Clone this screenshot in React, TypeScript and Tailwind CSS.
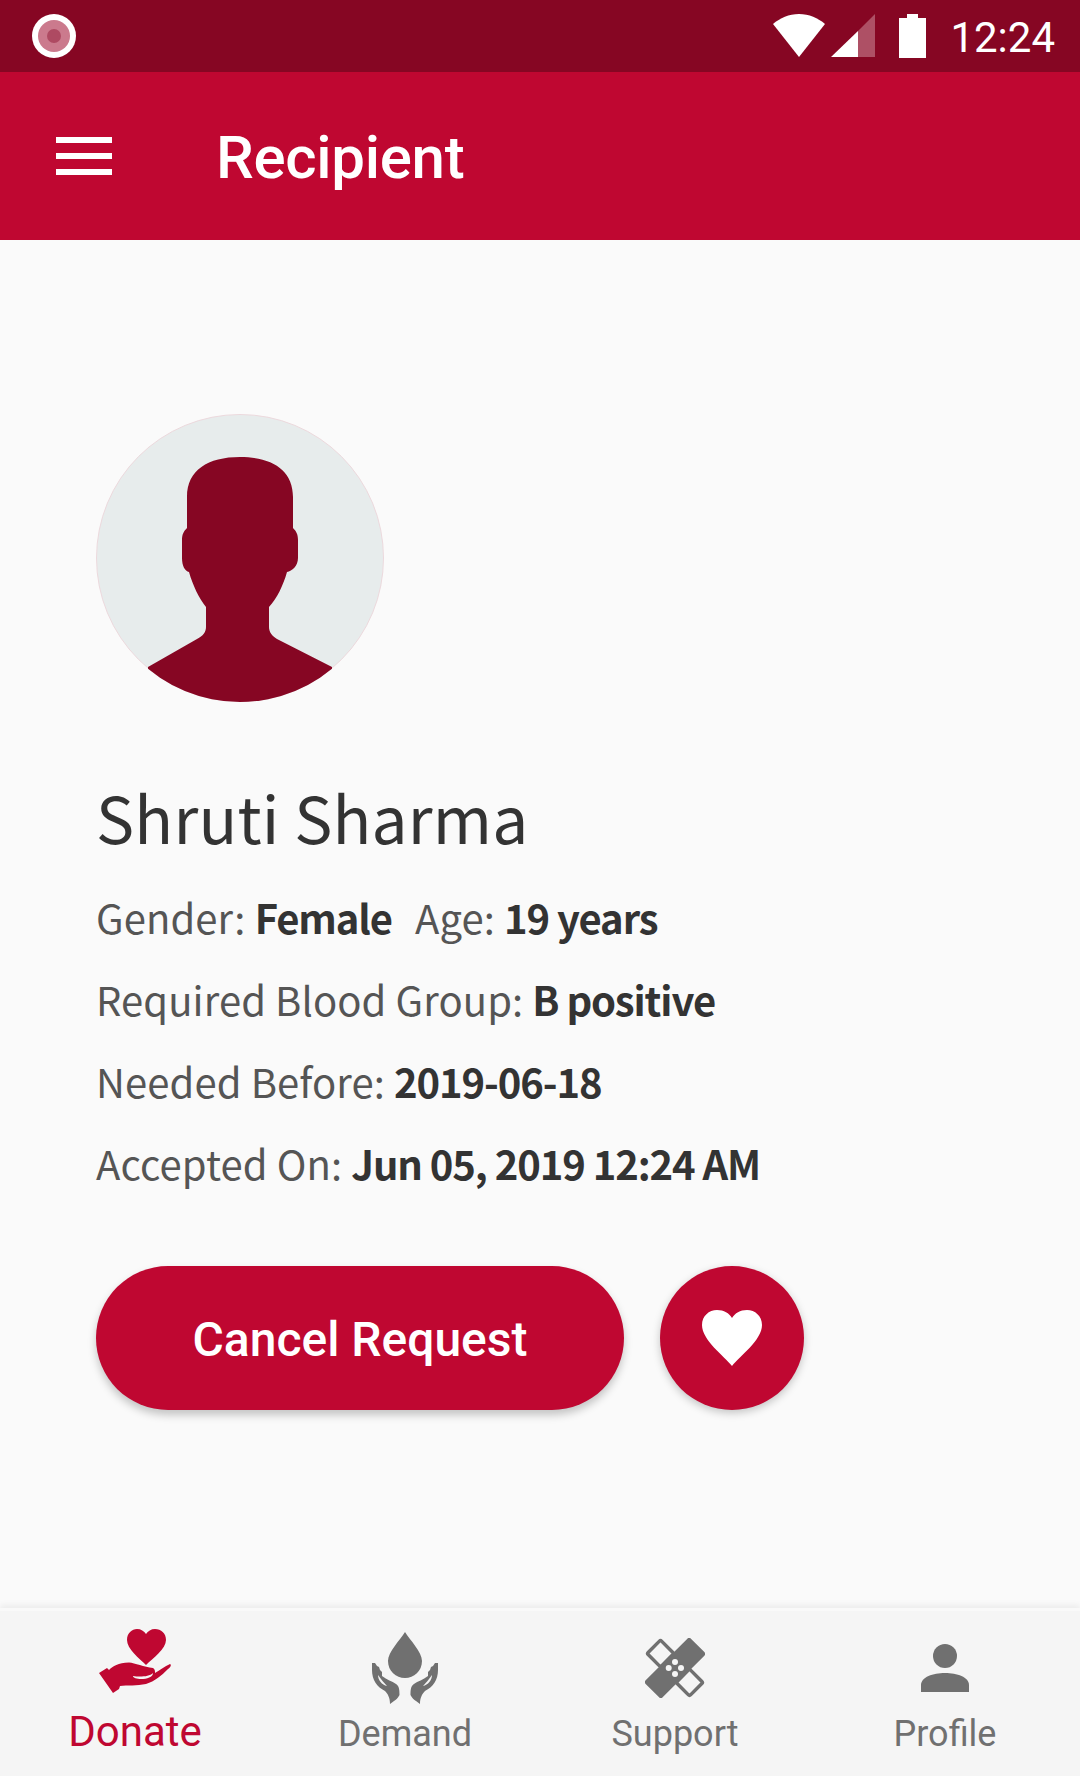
import React from 'react';

const ROBOTO = "font-['Roboto',sans-serif]";
const NOTO = "font-['Noto_Sans_CJK_SC','Noto_Sans',sans-serif]";

const StatusBar: React.FC = () => (
  <div className="h-[72px] bg-[#860623] flex items-center pl-[32px] pr-[25px]">
    <div className="w-[44px] h-[44px] rounded-full bg-white flex items-center justify-center">
      <div className="w-[32px] h-[32px] rounded-full bg-[#cb7a8d] flex items-center justify-center">
        <div className="w-[14px] h-[14px] rounded-full bg-[#ae4a62]"></div>
      </div>
    </div>
    <div className="ml-auto flex items-center">
      <svg width="52" height="44" viewBox="0 0 52 44" fill="#fff">
        <path d="M26 43 L0 10 C7 4 16 0 26 0 C36 0 45 4 52 10 Z" />
      </svg>
      <svg width="44" height="44" viewBox="0 0 44 44" className="ml-[6px]">
        <path d="M44 0 L44 43 L27 43 L27 17 Z" fill="#ae5065" />
        <path d="M27 17 L27 43 L0 43 Z" fill="#fff" />
      </svg>
      <svg width="27" height="44" viewBox="0 0 27 44" fill="#fff" className="ml-[24px]">
        <path d="M8 0 H19 V4 H27 V44 H0 V4 H8 Z" />
      </svg>
      <span className={`${ROBOTO} ml-[24px] pt-[4px] text-[42px] leading-none text-white`}>12:24</span>
    </div>
  </div>
);

const Header: React.FC = () => (
  <div className="h-[168px] bg-[#bf0731] flex items-center pl-[56px]">
    <div className="flex flex-col gap-[10px]">
      <div className="w-[56px] h-[6px] bg-white"></div>
      <div className="w-[56px] h-[6px] bg-white"></div>
      <div className="w-[56px] h-[6px] bg-white"></div>
    </div>
    <span className={`${ROBOTO} ml-[104px] pt-[4px] text-[60px] font-medium leading-none tracking-[-0.3px] text-white`}>Recipient</span>
  </div>
);

const Avatar: React.FC = () => (
  <svg width="288" height="288" viewBox="0 0 288 288">
    <defs>
      <clipPath id="avatar-clip">
        <circle cx="144" cy="144" r="144" />
      </clipPath>
    </defs>
    <circle cx="144" cy="144" r="143.5" fill="#e7ecec" stroke="#ecd9dd" strokeWidth="1" />
    <path
      clipPath="url(#avatar-clip)"
      d="M91 83 C91 56 112 43 144 43 C176 43 197 56 197 83 L197 114 C200 117 202 120 202 126 L202 144 C202 152 196 157 191 158 C187 172 181 184 173 193 L173 213 C173 218 176 222 181 225 L236 253 L236 288 L52 288 L52 253 L101 225 C107 222 110 218 110 213 L110 193 C103 184 97 172 93 158 C89 157 86 152 86 144 L86 126 C86 120 88 117 91 114 Z"
      fill="#860623"
    />
  </svg>
);

const InfoRow: React.FC<{ label: string; value: string }> = ({ label, value }) => (
  <span>
    <span className="text-[#555555] tracking-[0.1px]">{label} </span>
    <span className="font-bold text-[#333333] tracking-[-1.1px]">{value}</span>
  </span>
);

const DonateIcon: React.FC = () => (
  <svg width="72" height="64" viewBox="0 0 72 64" fill="#bf0731">
    <path d="M47 36 C40 29 28 20 28 11 C28 4 33 0 38 0 C42 0 45 2 47 5 C49 2 52 0 56 0 C62 0 67 4 67 11 C67 20 54 29 47 36 Z" />
    <path d="M0 44 L8 39 L10 41 C14 37 19 34 30 33.5 C36 34 45 38 54 39 C56 40 56 42 56 44 C60 42 66 37 71 35 C73 36 71 39 69 40 C62 47 56 52 47 55 C38 57 28 56 21 57 L20 60 L14 64 Z" />
    <path d="M34 47 C40 48 50 48 54 44 C54 48 48 50 42 50 C38 50 34 49 34 47 Z" fill="#f5f5f5" />
  </svg>
);

const DemandIcon: React.FC = () => (
  <svg width="66" height="72" viewBox="0 0 66 72" fill="#707070">
    <path d="M33 0 C38 8 50 20 50 29 C50 39 42 46 33 46 C24 46 16 39 16 29 C16 20 28 8 33 0 Z" />
    <path fillRule="evenodd" d="M0 31 L3 31 L5 34 L7 35 L8 38 L10 40 L10 44 C15 48 20 49 24 52 C27 54 27.5 57 27.5 63 C26 66 24 68 22 69 L18 72 C18 66 16 62 13 59 C5 55 0 48 0 38 Z M6 43 C6 48 10 53 15 54 C12 51 9 47 6 43 Z" />
    <path fillRule="evenodd" d="M66 31 L63 31 L61 34 L59 35 L58 38 L56 40 L56 44 C51 48 46 49 42 52 C39 54 38.5 57 38.5 63 C40 66 42 68 44 69 L48 72 C48 66 50 62 53 59 C61 55 66 48 66 38 Z M60 43 C60 48 56 53 51 54 C54 51 57 47 60 43 Z" />
  </svg>
);

const SupportIcon: React.FC = () => (
  <svg width="60" height="60" viewBox="0 0 60 60">
    <rect x="6" y="6" width="19" height="19" rx="1.5" transform="rotate(45 15.5 15.5)" fill="none" stroke="#707070" strokeWidth="3.5" />
    <rect x="35" y="35" width="19" height="19" rx="1.5" transform="rotate(45 44.5 44.5)" fill="none" stroke="#707070" strokeWidth="3.5" />
    <rect x="-2" y="18" width="64" height="24" rx="2.5" transform="rotate(-45 30 30)" fill="#707070" />
    <circle cx="30" cy="24" r="3" fill="#f5f5f5" />
    <circle cx="23.7" cy="30" r="3" fill="#f5f5f5" />
    <circle cx="36" cy="30" r="3" fill="#f5f5f5" />
    <circle cx="30" cy="36" r="3" fill="#f5f5f5" />
  </svg>
);

const ProfileIcon: React.FC = () => (
  <svg width="48" height="48" viewBox="0 0 48 48" fill="#707070">
    <circle cx="24" cy="12" r="12" />
    <path d="M0 48 V41 C0 33 12 29 24 29 C36 29 48 33 48 41 V48 Z" />
  </svg>
);

const BottomNav: React.FC = () => (
  <div className="h-[168px] border-t-[3px] border-[#f9f9f9] bg-[#f5f5f5] shadow-[0_-3px_6px_rgba(0,0,0,0.06)] grid grid-cols-4 text-[#707070]">
    <div className="flex flex-col items-center pt-[18px]">
      <DonateIcon />
      <span className={`${ROBOTO} mt-[9px] text-[42px] leading-[60px] h-[60px] text-[#bf0731]`}>Donate</span>
    </div>
    <div className="flex flex-col items-center pt-[21px]">
      <DemandIcon />
      <span className={`${ROBOTO} mt-[4px] text-[36px] leading-[52px]`}>Demand</span>
    </div>
    <div className="flex flex-col items-center pt-[27px]">
      <SupportIcon />
      <span className={`${ROBOTO} mt-[10px] text-[36px] leading-[52px]`}>Support</span>
    </div>
    <div className="flex flex-col items-center pt-[33px]">
      <ProfileIcon />
      <span className={`${ROBOTO} mt-[16px] text-[36px] leading-[52px]`}>Profile</span>
    </div>
  </div>
);

export default function App() {
  return (
    <div className="w-[1080px] h-[1776px] flex flex-col overflow-hidden bg-[#fafafa]">
      <StatusBar />
      <Header />

      <div className="flex-1 pl-[96px] pt-[174px]">
        <Avatar />
        <h1 className={`${NOTO} mt-[66px] text-[64px] leading-[96px] font-normal text-[#333333] tracking-[0.2px]`}>Shruti Sharma</h1>
        <div className={`${NOTO} mt-[12px] flex flex-col text-[40px] leading-[82px]`}>
          <div className="flex gap-[23px]">
            <InfoRow label="Gender:" value="Female" />
            <InfoRow label="Age:" value="19 years" />
          </div>
          <InfoRow label="Required Blood Group:" value="B positive" />
          <InfoRow label="Needed Before:" value="2019-06-18" />
          <InfoRow label="Accepted On:" value="Jun 05, 2019 12:24 AM" />
        </div>

        <div className="mt-[62px] flex gap-[36px]">
          <button className={`${ROBOTO} w-[528px] h-[144px] pt-[3px] rounded-full bg-[#bf0731] text-white text-[48px] font-medium shadow-[0_5px_8px_rgba(0,0,0,0.22)]`}>
            Cancel Request
          </button>
          <button className="w-[144px] h-[144px] rounded-full bg-[#bf0731] flex items-center justify-center shadow-[0_3px_8px_rgba(0,0,0,0.22)]">
            <svg width="60" height="56" viewBox="0 0 60 56" fill="#fff">
              <path d="M30 56 C22 46 0 30 0 15 C0 6 7 0 15 0 C22 0 27 3 30 8 C33 3 38 0 45 0 C53 0 60 6 60 15 C60 30 38 46 30 56 Z" />
            </svg>
          </button>
        </div>
      </div>

      <BottomNav />
    </div>
  );
}
